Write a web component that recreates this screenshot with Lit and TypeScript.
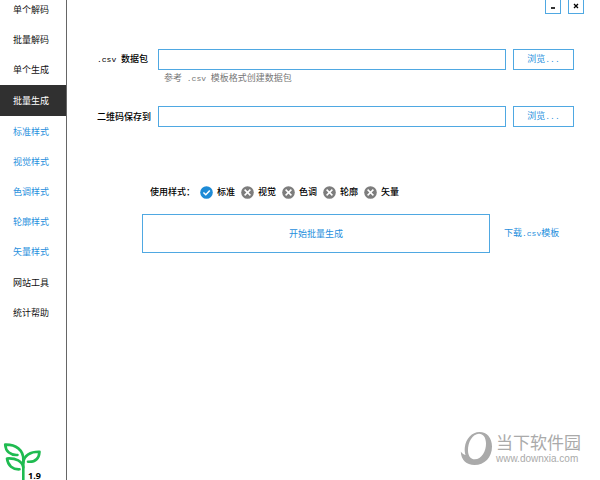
import { LitElement, html, css, svg } from "lit";
import { customElement, state } from "lit/decorators.js";
import { classMap } from "lit/directives/class-map.js";

interface StyleOption {
  name: string;
  on: boolean;
}

const NAV_GROUPS: { sub: boolean; items: string[] }[] = [
  { sub: false, items: ["单个解码", "批量解码", "单个生成", "批量生成"] },
  { sub: true, items: ["标准样式", "视觉样式", "色调样式", "轮廓样式", "矢量样式"] },
  { sub: false, items: ["网站工具", "统计帮助"] },
];

@customElement("app-root")
export class AppRoot extends LitElement {
  static styles = css`
    :host {
      display: flex;
      height: 100vh;
      overflow: hidden;
      background: #fff;
      color: #000;
      font: 400 9px/14px "Noto Sans CJK SC", sans-serif;
    }
    * {
      box-sizing: border-box;
    }
    button,
    input {
      font: inherit;
      margin: 0;
      padding: 0;
      border-radius: 0;
    }
    .latin {
      font-family: "Liberation Mono", monospace;
      font-size: 8px;
      white-space: pre;
    }
    .side {
      flex: none;
      width: 67px;
      display: flex;
      flex-direction: column;
      border-right: 1px solid #666;
    }
    .nav {
      display: flex;
      flex-direction: column;
      gap: 1px;
      margin-top: -5px;
    }
    .group {
      display: flex;
      flex-direction: column;
    }
    .item {
      height: 30px;
      padding-right: 4px;
      border: 0;
      background: none;
      color: #111;
    }
    .sub .item {
      color: #1f8fdd;
    }
    .item.active {
      height: 31px;
      background: #303030;
      color: #fff;
    }
    .brand {
      margin-top: auto;
      display: flex;
      align-items: flex-end;
      padding-left: 3px;
      height: 38px;
    }
    .leaf {
      width: 38px;
      height: 38px;
      flex: none;
    }
    .version {
      margin-left: -13px;
      font: 700 9px/8px "Open Sans", sans-serif;
    }
    .main {
      flex: 1;
      min-width: 0;
      display: flex;
      flex-direction: column;
    }
    .window {
      display: flex;
      justify-content: flex-end;
      gap: 7px;
      padding-right: 16px;
    }
    .win {
      display: grid;
      place-items: center;
      width: 16px;
      height: 14px;
      border: 1px solid #4fa8e2;
      border-top: 0;
      background: #fff;
      color: #000;
    }
    .form {
      margin-top: 35px;
      padding: 0 26px 0 30px;
      display: grid;
      grid-template-columns: 61px 1fr 68px;
      align-items: center;
    }
    .field {
      font-weight: 500;
    }
    .box {
      width: 100%;
      height: 21px;
      border: 1px solid #4fa8e2;
      background: #fff;
      padding: 0 5px;
      outline: none;
    }
    .browse {
      justify-self: end;
      width: 61px;
      height: 21px;
      border: 1px solid #4fa8e2;
      background: #fff;
      color: #1f8fdd;
    }
    .hint {
      grid-column: 2 / 4;
      height: 16px;
      margin: 0 0 20px;
      padding-left: 6px;
      color: #777;
      line-height: 16px;
    }
    .options {
      display: flex;
      align-items: center;
      gap: 6px;
      margin-top: 58px;
      padding-left: 83px;
      height: 14px;
      font-weight: 500;
    }
    .legend {
      width: 44px;
      white-space: nowrap;
    }
    .option {
      position: relative;
      display: flex;
      align-items: center;
      gap: 4px;
    }
    .tick {
      position: absolute;
      inset: 0;
      opacity: 0;
    }
    .mark {
      width: 13px;
      height: 13px;
      display: block;
    }
    .run {
      display: flex;
      align-items: center;
      gap: 14px;
      margin-top: 15px;
      padding: 0 41px 0 75px;
    }
    .start {
      flex: 1;
      height: 39px;
      border: 1px solid #4fa8e2;
      background: #fff;
      color: #1f8fdd;
    }
    .link {
      width: 55px;
      color: #1f8fdd;
      text-decoration: none;
      white-space: nowrap;
    }
    .mark-row {
      margin: auto 17px 14px auto;
      display: flex;
      align-items: center;
      gap: 3px;
      color: #aaa;
    }
    .ring {
      width: 33px;
      height: 35px;
    }
    .site {
      display: flex;
      flex-direction: column;
      width: 87px;
    }
    .site-name {
      font-size: 17px;
      line-height: 20px;
      white-space: nowrap;
    }
    .site-url {
      font: 10px/14px "Liberation Sans", sans-serif;
      white-space: nowrap;
    }
  `;

  @state() private active = "批量生成";

  @state() private options: StyleOption[] = [
    { name: "标准", on: true },
    { name: "视觉", on: false },
    { name: "色调", on: false },
    { name: "轮廓", on: false },
    { name: "矢量", on: false },
  ];

  private toggle(index: number) {
    this.options = this.options.map((o, i) => (i === index ? { ...o, on: !o.on } : o));
  }

  private renderMark(on: boolean) {
    return html`<svg class="mark" viewBox="0 0 13 13" aria-hidden="true">
      <circle cx="6.5" cy="6.5" r="6.3" fill=${on ? "#1e8bd6" : "#7d7d7d"}></circle>
      ${on
        ? svg`<path d="M3.4 6.5l2.4 2.3 4-4.3" fill="none" stroke="#fff" stroke-width="1.5"/>`
        : svg`<path d="M3.6 3.6l5.8 5.8M9.4 3.6l-5.8 5.8" fill="none" stroke="#fff" stroke-width="1.5"/>`}
    </svg>`;
  }

  render() {
    return html`
      <aside class="side">
        <nav class="nav">
          ${NAV_GROUPS.map(
            (g) => html`<div class=${classMap({ group: true, sub: g.sub })}>
              ${g.items.map(
                (name) => html`<button
                  type="button"
                  class=${classMap({ item: true, active: name === this.active })}
                  @click=${() => (this.active = name)}
                >${name}</button>`
              )}
            </div>`
          )}
        </nav>
        <div class="brand">
          <svg class="leaf" viewBox="0 0 38 38" fill="none" stroke="#1fbb50" stroke-width="2.6" stroke-linecap="round" stroke-linejoin="round" aria-hidden="true">
            <path d="M20.3 38V17.5C20.3 8 13 2.3 2.2 2.6C2.6 9.5 7.5 13.5 14.5 13"></path>
            <path d="M20.3 20.5C21 13.5 27.5 9.5 36.5 9.8C36 16.5 32 20.2 25 19.7"></path>
            <path d="M20.3 25.5C19.3 19.5 13 15.8 4 16.5C4.8 23.5 9.8 27.7 16.5 27.3"></path>
          </svg>
          <span class="version">1.9</span>
        </div>
      </aside>
      <main class="main">
        <div class="window">
          <button type="button" class="win" aria-label="最小化">
            <svg width="6" height="8" viewBox="0 0 6 8"><path d="M1 5h4" stroke="#000" stroke-width="1.6"></path></svg>
          </button>
          <button type="button" class="win" aria-label="关闭">
            <svg width="6" height="8" viewBox="0 0 6 8"><path d="M1 1l4 4M5 1l-4 4" stroke="#000" stroke-width="1.3"></path></svg>
          </button>
        </div>
        <div class="form">
          <label class="field" for="source"><span class="latin">.csv </span>数据包</label>
          <input id="source" class="box" type="text" />
          <button type="button" class="browse">浏览<span class="latin">...</span></button>
          <p class="hint">参考<span class="latin"> .csv </span>模板格式创建数据包</p>
          <label class="field" for="target">二维码保存到</label>
          <input id="target" class="box" type="text" />
          <button type="button" class="browse">浏览<span class="latin">...</span></button>
        </div>
        <div class="options" role="group" aria-labelledby="styles-label">
          <span id="styles-label" class="legend">使用样式：</span>
          ${this.options.map(
            (o, i) => html`<label class="option">
              <input class="tick" type="checkbox" .checked=${o.on} @change=${() => this.toggle(i)} />
              ${this.renderMark(o.on)}${o.name}
            </label>`
          )}
        </div>
        <div class="run">
          <button type="button" class="start">开始批量生成</button>
          <a class="link" href="#template">下载<span class="latin">.csv</span>模板</a>
        </div>
        <div class="mark-row">
          <svg class="ring" viewBox="0 0 33 35" aria-hidden="true">
            <path fill="currentColor" fill-rule="evenodd" d="M19.5 1C27 1 32 7 32 15.5C32 26.5 24.5 34 14.5 34C6.5 34 1 29 .8 20.5C2 22.5 3.5 23.5 5.5 24C4.8 21.5 4.5 19 4.8 16.5C5.8 7.5 12 1 19.5 1ZM19 2.8C12.5 2.8 7.5 11.5 8 20C8.3 25.3 10.8 28.3 14.8 28.3C21.5 28.3 26.3 20 26 12C25.8 6.5 23.2 2.8 19 2.8Z"></path>
          </svg>
          <div class="site">
            <span class="site-name">当下软件园</span>
            <span class="site-url">www.downxia.com</span>
          </div>
        </div>
      </main>
    `;
  }
}
